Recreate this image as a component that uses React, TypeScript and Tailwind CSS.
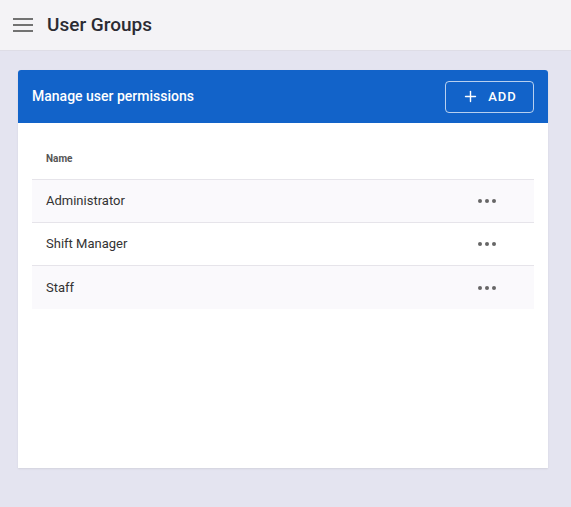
import { Plus } from "lucide-react";

const groups = ["Administrator", "Shift Manager", "Staff"];

export default function App() {
  return (
    <div
      className="min-h-[507px] w-full bg-[#e4e4f0] text-[#333]"
      style={{ fontFamily: "Roboto, 'Liberation Sans', sans-serif" }}
    >
      <header className="flex h-[51px] items-center gap-[14px] border-b border-[#dedde6] bg-[#f4f3f6] pl-[13px]">
        <svg width="20" height="16" viewBox="0 0 20 16" className="text-[#727272]">
          <rect x="0" y="1" width="20" height="2" fill="currentColor" />
          <rect x="0" y="7" width="20" height="2" fill="currentColor" />
          <rect x="0" y="13" width="20" height="2" fill="currentColor" />
        </svg>
        <h1 className="text-[19px] font-medium text-[#2b2b33]">User Groups</h1>
      </header>

      <div className="px-[18px] pt-[19px] pr-[23px]">
        <div className="flex h-[398px] flex-col overflow-hidden rounded-t-[3px] bg-white shadow-[0_1px_2px_rgba(0,0,0,0.08)]">
          <div className="flex h-[53px] items-center justify-between bg-[#1263c9] pl-[14px] pr-[14px]">
            <span className="text-[14px] font-medium text-white">Manage user permissions</span>
            <button className="flex h-[32px] w-[89px] items-center justify-center gap-[9px] rounded-[4px] border border-white/70 text-[13px] font-medium tracking-[0.08em] text-white">
              <Plus size={17} strokeWidth={2} />
              ADD
            </button>
          </div>

          <div className="px-[14px] pt-[28px]">
            <div className="flex h-[29px] items-start border-b border-[#e6e4ea] pl-[14px] text-[10px] font-bold text-[#555]">
              Name
            </div>
            {groups.map((g, i) => (
              <div
                key={g}
                className={`flex h-[43px] items-center justify-between pl-[14px] pr-[38px] text-[13px] text-[#333] ${
                  i % 2 === 0 ? "bg-[#faf9fc]" : "bg-white"
                } ${i < groups.length - 1 ? "border-b border-[#e6e4ea]" : ""}`}
              >
                <span>{g}</span>
                <span className="flex gap-[3px]">
                  <span className="h-[4px] w-[4px] rounded-full bg-[#666]" />
                  <span className="h-[4px] w-[4px] rounded-full bg-[#666]" />
                  <span className="h-[4px] w-[4px] rounded-full bg-[#666]" />
                </span>
              </div>
            ))}
          </div>
        </div>
      </div>
    </div>
  );
}
